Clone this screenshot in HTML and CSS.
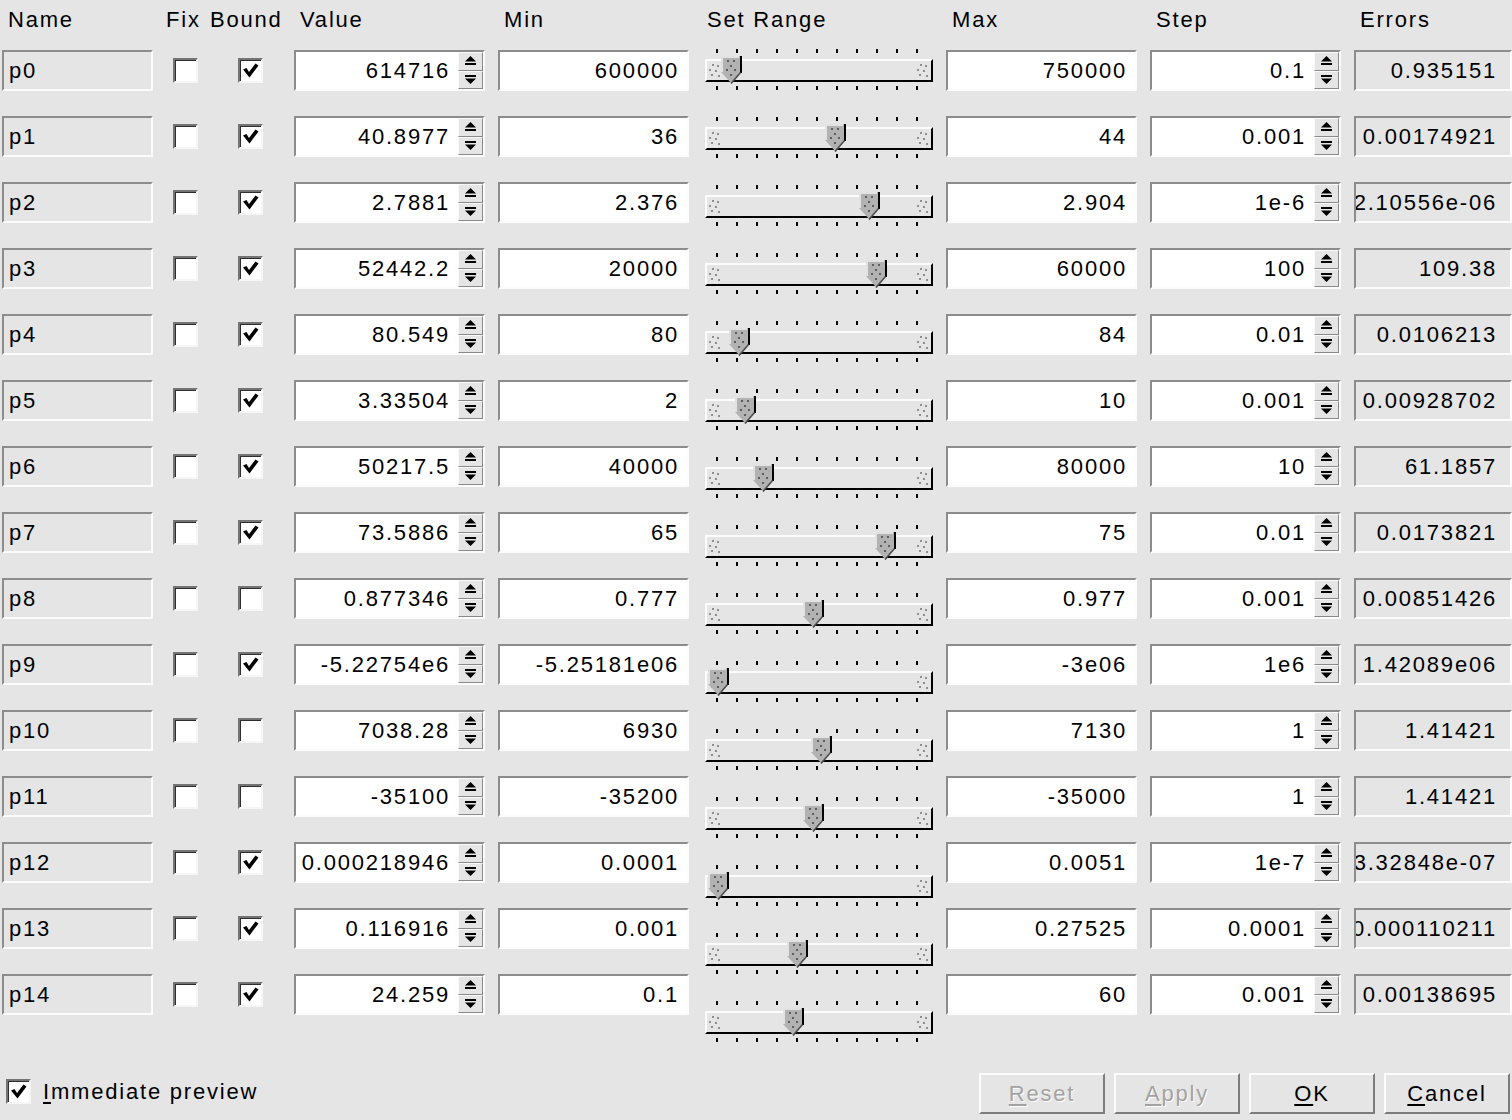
FILE: index.html
```html
<!DOCTYPE html>
<html>
<head>
<meta charset="utf-8">
<title>Parameters</title>
<link rel="stylesheet" href="styles.css">
</head>
<body>
<svg class="defs" width="0" height="0">
  <symbol id="check" viewBox="0 0 21 21"><path d="M3 9.5L6.5 8L9 12L15.5 3.5L18.5 5.5L9.5 17.5Z" fill="#000"/></symbol>
  <symbol id="up" viewBox="0 0 11 10"><path d="M0 5.5L5.5 0L11 5.5Z"/><rect y="7" width="11" height="2"/></symbol>
  <symbol id="down" viewBox="0 0 11 10"><rect y="0" width="11" height="2"/><path d="M0 3.5H11L5.5 9Z"/></symbol>
  <symbol id="stip" viewBox="0 0 13 16"><g fill="#8e8e8e"><rect x="4" y="2" width="2" height="2"/><rect x="9" y="3" width="2" height="2"/><rect x="1" y="7" width="2" height="2"/><rect x="7" y="8" width="2" height="2"/><rect x="3" y="12" width="2" height="2"/><rect x="10" y="13" width="2" height="2"/></g></symbol>
  <symbol id="thumb" viewBox="0 0 21 28"><path d="M0 0H19V16L10 27L0 16Z" fill="#b2b2b2"/><path d="M1 16V1H18" fill="none" stroke="#e2e2e2" stroke-width="2"/><path d="M20 0V17" stroke="#000" stroke-width="2"/><path d="M19.5 16.5L10 27.5" stroke="#4a4a4a" stroke-width="1.6"/><g fill="#5e5e5e"><rect x="6" y="4" width="2" height="2"/><rect x="12" y="4" width="2" height="2"/><rect x="9" y="9" width="2" height="2"/><rect x="5" y="13" width="2" height="2"/><rect x="13" y="13" width="2" height="2"/><rect x="9" y="18" width="2" height="2"/></g></symbol>
</svg>
<div class="dialog">
  <div class="table">
    <div class="col col-name">
      <div class="hdr">Name</div>
      <div class="cell field name"><span class="v">p0</span></div>
      <div class="cell field name"><span class="v">p1</span></div>
      <div class="cell field name"><span class="v">p2</span></div>
      <div class="cell field name"><span class="v">p3</span></div>
      <div class="cell field name"><span class="v">p4</span></div>
      <div class="cell field name"><span class="v">p5</span></div>
      <div class="cell field name"><span class="v">p6</span></div>
      <div class="cell field name"><span class="v">p7</span></div>
      <div class="cell field name"><span class="v">p8</span></div>
      <div class="cell field name"><span class="v">p9</span></div>
      <div class="cell field name"><span class="v">p10</span></div>
      <div class="cell field name"><span class="v">p11</span></div>
      <div class="cell field name"><span class="v">p12</span></div>
      <div class="cell field name"><span class="v">p13</span></div>
      <div class="cell field name"><span class="v">p14</span></div>
    </div>
    <div class="col col-fix">
      <div class="hdr hdr-tight">Fix</div>
      <div class="cell cbcell"><span class="cb"></span></div>
      <div class="cell cbcell"><span class="cb"></span></div>
      <div class="cell cbcell"><span class="cb"></span></div>
      <div class="cell cbcell"><span class="cb"></span></div>
      <div class="cell cbcell"><span class="cb"></span></div>
      <div class="cell cbcell"><span class="cb"></span></div>
      <div class="cell cbcell"><span class="cb"></span></div>
      <div class="cell cbcell"><span class="cb"></span></div>
      <div class="cell cbcell"><span class="cb"></span></div>
      <div class="cell cbcell"><span class="cb"></span></div>
      <div class="cell cbcell"><span class="cb"></span></div>
      <div class="cell cbcell"><span class="cb"></span></div>
      <div class="cell cbcell"><span class="cb"></span></div>
      <div class="cell cbcell"><span class="cb"></span></div>
      <div class="cell cbcell"><span class="cb"></span></div>
    </div>
    <div class="col col-bound">
      <div class="hdr hdr-tight">Bound</div>
      <div class="cell cbcell"><span class="cb"><svg class="tick"><use href="#check"/></svg></span></div>
      <div class="cell cbcell"><span class="cb"><svg class="tick"><use href="#check"/></svg></span></div>
      <div class="cell cbcell"><span class="cb"><svg class="tick"><use href="#check"/></svg></span></div>
      <div class="cell cbcell"><span class="cb"><svg class="tick"><use href="#check"/></svg></span></div>
      <div class="cell cbcell"><span class="cb"><svg class="tick"><use href="#check"/></svg></span></div>
      <div class="cell cbcell"><span class="cb"><svg class="tick"><use href="#check"/></svg></span></div>
      <div class="cell cbcell"><span class="cb"><svg class="tick"><use href="#check"/></svg></span></div>
      <div class="cell cbcell"><span class="cb"><svg class="tick"><use href="#check"/></svg></span></div>
      <div class="cell cbcell"><span class="cb"></span></div>
      <div class="cell cbcell"><span class="cb"><svg class="tick"><use href="#check"/></svg></span></div>
      <div class="cell cbcell"><span class="cb"></span></div>
      <div class="cell cbcell"><span class="cb"></span></div>
      <div class="cell cbcell"><span class="cb"><svg class="tick"><use href="#check"/></svg></span></div>
      <div class="cell cbcell"><span class="cb"><svg class="tick"><use href="#check"/></svg></span></div>
      <div class="cell cbcell"><span class="cb"><svg class="tick"><use href="#check"/></svg></span></div>
    </div>
    <div class="col col-wide">
      <div class="hdr">Value</div>
      <div class="cell spin"><div class="entry"><span class="v">614716</span></div><div class="btns"><span class="sb"><svg class="arr"><use href="#up"/></svg></span><span class="sb"><svg class="arr"><use href="#down"/></svg></span></div></div>
      <div class="cell spin"><div class="entry"><span class="v">40.8977</span></div><div class="btns"><span class="sb"><svg class="arr"><use href="#up"/></svg></span><span class="sb"><svg class="arr"><use href="#down"/></svg></span></div></div>
      <div class="cell spin"><div class="entry"><span class="v">2.7881</span></div><div class="btns"><span class="sb"><svg class="arr"><use href="#up"/></svg></span><span class="sb"><svg class="arr"><use href="#down"/></svg></span></div></div>
      <div class="cell spin"><div class="entry"><span class="v">52442.2</span></div><div class="btns"><span class="sb"><svg class="arr"><use href="#up"/></svg></span><span class="sb"><svg class="arr"><use href="#down"/></svg></span></div></div>
      <div class="cell spin"><div class="entry"><span class="v">80.549</span></div><div class="btns"><span class="sb"><svg class="arr"><use href="#up"/></svg></span><span class="sb"><svg class="arr"><use href="#down"/></svg></span></div></div>
      <div class="cell spin"><div class="entry"><span class="v">3.33504</span></div><div class="btns"><span class="sb"><svg class="arr"><use href="#up"/></svg></span><span class="sb"><svg class="arr"><use href="#down"/></svg></span></div></div>
      <div class="cell spin"><div class="entry"><span class="v">50217.5</span></div><div class="btns"><span class="sb"><svg class="arr"><use href="#up"/></svg></span><span class="sb"><svg class="arr"><use href="#down"/></svg></span></div></div>
      <div class="cell spin"><div class="entry"><span class="v">73.5886</span></div><div class="btns"><span class="sb"><svg class="arr"><use href="#up"/></svg></span><span class="sb"><svg class="arr"><use href="#down"/></svg></span></div></div>
      <div class="cell spin"><div class="entry"><span class="v">0.877346</span></div><div class="btns"><span class="sb"><svg class="arr"><use href="#up"/></svg></span><span class="sb"><svg class="arr"><use href="#down"/></svg></span></div></div>
      <div class="cell spin"><div class="entry"><span class="v">-5.22754e6</span></div><div class="btns"><span class="sb"><svg class="arr"><use href="#up"/></svg></span><span class="sb"><svg class="arr"><use href="#down"/></svg></span></div></div>
      <div class="cell spin"><div class="entry"><span class="v">7038.28</span></div><div class="btns"><span class="sb"><svg class="arr"><use href="#up"/></svg></span><span class="sb"><svg class="arr"><use href="#down"/></svg></span></div></div>
      <div class="cell spin"><div class="entry"><span class="v">-35100</span></div><div class="btns"><span class="sb"><svg class="arr"><use href="#up"/></svg></span><span class="sb"><svg class="arr"><use href="#down"/></svg></span></div></div>
      <div class="cell spin"><div class="entry"><span class="v">0.000218946</span></div><div class="btns"><span class="sb"><svg class="arr"><use href="#up"/></svg></span><span class="sb"><svg class="arr"><use href="#down"/></svg></span></div></div>
      <div class="cell spin"><div class="entry"><span class="v">0.116916</span></div><div class="btns"><span class="sb"><svg class="arr"><use href="#up"/></svg></span><span class="sb"><svg class="arr"><use href="#down"/></svg></span></div></div>
      <div class="cell spin"><div class="entry"><span class="v">24.259</span></div><div class="btns"><span class="sb"><svg class="arr"><use href="#up"/></svg></span><span class="sb"><svg class="arr"><use href="#down"/></svg></span></div></div>
    </div>
    <div class="col col-wide">
      <div class="hdr">Min</div>
      <div class="cell field num"><span class="v">600000</span></div>
      <div class="cell field num"><span class="v">36</span></div>
      <div class="cell field num"><span class="v">2.376</span></div>
      <div class="cell field num"><span class="v">20000</span></div>
      <div class="cell field num"><span class="v">80</span></div>
      <div class="cell field num"><span class="v">2</span></div>
      <div class="cell field num"><span class="v">40000</span></div>
      <div class="cell field num"><span class="v">65</span></div>
      <div class="cell field num"><span class="v">0.777</span></div>
      <div class="cell field num"><span class="v">-5.25181e06</span></div>
      <div class="cell field num"><span class="v">6930</span></div>
      <div class="cell field num"><span class="v">-35200</span></div>
      <div class="cell field num"><span class="v">0.0001</span></div>
      <div class="cell field num"><span class="v">0.001</span></div>
      <div class="cell field num"><span class="v">0.1</span></div>
    </div>
    <div class="col col-range">
      <div class="hdr hdr-range">Set Range</div>
      <div class="slider"><div class="ticks"></div><div class="track"><svg class="stip"><use href="#stip"/></svg><svg class="stip"><use href="#stip"/></svg><svg class="thumb" style="left:14px"><use href="#thumb"/></svg></div><div class="ticks"></div></div>
      <div class="slider"><div class="ticks"></div><div class="track"><svg class="stip"><use href="#stip"/></svg><svg class="stip"><use href="#stip"/></svg><svg class="thumb" style="left:118px"><use href="#thumb"/></svg></div><div class="ticks"></div></div>
      <div class="slider"><div class="ticks"></div><div class="track"><svg class="stip"><use href="#stip"/></svg><svg class="stip"><use href="#stip"/></svg><svg class="thumb" style="left:152px"><use href="#thumb"/></svg></div><div class="ticks"></div></div>
      <div class="slider"><div class="ticks"></div><div class="track"><svg class="stip"><use href="#stip"/></svg><svg class="stip"><use href="#stip"/></svg><svg class="thumb" style="left:159px"><use href="#thumb"/></svg></div><div class="ticks"></div></div>
      <div class="slider"><div class="ticks"></div><div class="track"><svg class="stip"><use href="#stip"/></svg><svg class="stip"><use href="#stip"/></svg><svg class="thumb" style="left:22px"><use href="#thumb"/></svg></div><div class="ticks"></div></div>
      <div class="slider"><div class="ticks"></div><div class="track"><svg class="stip"><use href="#stip"/></svg><svg class="stip"><use href="#stip"/></svg><svg class="thumb" style="left:28px"><use href="#thumb"/></svg></div><div class="ticks"></div></div>
      <div class="slider"><div class="ticks"></div><div class="track"><svg class="stip"><use href="#stip"/></svg><svg class="stip"><use href="#stip"/></svg><svg class="thumb" style="left:46px"><use href="#thumb"/></svg></div><div class="ticks"></div></div>
      <div class="slider"><div class="ticks"></div><div class="track"><svg class="stip"><use href="#stip"/></svg><svg class="stip"><use href="#stip"/></svg><svg class="thumb" style="left:168px"><use href="#thumb"/></svg></div><div class="ticks"></div></div>
      <div class="slider"><div class="ticks"></div><div class="track"><svg class="stip"><use href="#stip"/></svg><svg class="stip"><use href="#stip"/></svg><svg class="thumb" style="left:96px"><use href="#thumb"/></svg></div><div class="ticks"></div></div>
      <div class="slider"><div class="ticks"></div><div class="track"><svg class="stip"><use href="#stip"/></svg><svg class="stip"><use href="#stip"/></svg><svg class="thumb" style="left:1px"><use href="#thumb"/></svg></div><div class="ticks"></div></div>
      <div class="slider"><div class="ticks"></div><div class="track"><svg class="stip"><use href="#stip"/></svg><svg class="stip"><use href="#stip"/></svg><svg class="thumb" style="left:104px"><use href="#thumb"/></svg></div><div class="ticks"></div></div>
      <div class="slider"><div class="ticks"></div><div class="track"><svg class="stip"><use href="#stip"/></svg><svg class="stip"><use href="#stip"/></svg><svg class="thumb" style="left:96px"><use href="#thumb"/></svg></div><div class="ticks"></div></div>
      <div class="slider"><div class="ticks"></div><div class="track"><svg class="stip"><use href="#stip"/></svg><svg class="stip"><use href="#stip"/></svg><svg class="thumb" style="left:1px"><use href="#thumb"/></svg></div><div class="ticks"></div></div>
      <div class="slider"><div class="ticks"></div><div class="track"><svg class="stip"><use href="#stip"/></svg><svg class="stip"><use href="#stip"/></svg><svg class="thumb" style="left:80px"><use href="#thumb"/></svg></div><div class="ticks"></div></div>
      <div class="slider"><div class="ticks"></div><div class="track"><svg class="stip"><use href="#stip"/></svg><svg class="stip"><use href="#stip"/></svg><svg class="thumb" style="left:76px"><use href="#thumb"/></svg></div><div class="ticks"></div></div>
    </div>
    <div class="col col-wide">
      <div class="hdr">Max</div>
      <div class="cell field num"><span class="v">750000</span></div>
      <div class="cell field num"><span class="v">44</span></div>
      <div class="cell field num"><span class="v">2.904</span></div>
      <div class="cell field num"><span class="v">60000</span></div>
      <div class="cell field num"><span class="v">84</span></div>
      <div class="cell field num"><span class="v">10</span></div>
      <div class="cell field num"><span class="v">80000</span></div>
      <div class="cell field num"><span class="v">75</span></div>
      <div class="cell field num"><span class="v">0.977</span></div>
      <div class="cell field num"><span class="v">-3e06</span></div>
      <div class="cell field num"><span class="v">7130</span></div>
      <div class="cell field num"><span class="v">-35000</span></div>
      <div class="cell field num"><span class="v">0.0051</span></div>
      <div class="cell field num"><span class="v">0.27525</span></div>
      <div class="cell field num"><span class="v">60</span></div>
    </div>
    <div class="col col-wide">
      <div class="hdr">Step</div>
      <div class="cell spin"><div class="entry"><span class="v">0.1</span></div><div class="btns"><span class="sb"><svg class="arr"><use href="#up"/></svg></span><span class="sb"><svg class="arr"><use href="#down"/></svg></span></div></div>
      <div class="cell spin"><div class="entry"><span class="v">0.001</span></div><div class="btns"><span class="sb"><svg class="arr"><use href="#up"/></svg></span><span class="sb"><svg class="arr"><use href="#down"/></svg></span></div></div>
      <div class="cell spin"><div class="entry"><span class="v">1e-6</span></div><div class="btns"><span class="sb"><svg class="arr"><use href="#up"/></svg></span><span class="sb"><svg class="arr"><use href="#down"/></svg></span></div></div>
      <div class="cell spin"><div class="entry"><span class="v">100</span></div><div class="btns"><span class="sb"><svg class="arr"><use href="#up"/></svg></span><span class="sb"><svg class="arr"><use href="#down"/></svg></span></div></div>
      <div class="cell spin"><div class="entry"><span class="v">0.01</span></div><div class="btns"><span class="sb"><svg class="arr"><use href="#up"/></svg></span><span class="sb"><svg class="arr"><use href="#down"/></svg></span></div></div>
      <div class="cell spin"><div class="entry"><span class="v">0.001</span></div><div class="btns"><span class="sb"><svg class="arr"><use href="#up"/></svg></span><span class="sb"><svg class="arr"><use href="#down"/></svg></span></div></div>
      <div class="cell spin"><div class="entry"><span class="v">10</span></div><div class="btns"><span class="sb"><svg class="arr"><use href="#up"/></svg></span><span class="sb"><svg class="arr"><use href="#down"/></svg></span></div></div>
      <div class="cell spin"><div class="entry"><span class="v">0.01</span></div><div class="btns"><span class="sb"><svg class="arr"><use href="#up"/></svg></span><span class="sb"><svg class="arr"><use href="#down"/></svg></span></div></div>
      <div class="cell spin"><div class="entry"><span class="v">0.001</span></div><div class="btns"><span class="sb"><svg class="arr"><use href="#up"/></svg></span><span class="sb"><svg class="arr"><use href="#down"/></svg></span></div></div>
      <div class="cell spin"><div class="entry"><span class="v">1e6</span></div><div class="btns"><span class="sb"><svg class="arr"><use href="#up"/></svg></span><span class="sb"><svg class="arr"><use href="#down"/></svg></span></div></div>
      <div class="cell spin"><div class="entry"><span class="v">1</span></div><div class="btns"><span class="sb"><svg class="arr"><use href="#up"/></svg></span><span class="sb"><svg class="arr"><use href="#down"/></svg></span></div></div>
      <div class="cell spin"><div class="entry"><span class="v">1</span></div><div class="btns"><span class="sb"><svg class="arr"><use href="#up"/></svg></span><span class="sb"><svg class="arr"><use href="#down"/></svg></span></div></div>
      <div class="cell spin"><div class="entry"><span class="v">1e-7</span></div><div class="btns"><span class="sb"><svg class="arr"><use href="#up"/></svg></span><span class="sb"><svg class="arr"><use href="#down"/></svg></span></div></div>
      <div class="cell spin"><div class="entry"><span class="v">0.0001</span></div><div class="btns"><span class="sb"><svg class="arr"><use href="#up"/></svg></span><span class="sb"><svg class="arr"><use href="#down"/></svg></span></div></div>
      <div class="cell spin"><div class="entry"><span class="v">0.001</span></div><div class="btns"><span class="sb"><svg class="arr"><use href="#up"/></svg></span><span class="sb"><svg class="arr"><use href="#down"/></svg></span></div></div>
    </div>
    <div class="col col-err">
      <div class="hdr">Errors</div>
      <div class="cell field err"><span class="v">0.935151</span></div>
      <div class="cell field err"><span class="v">0.00174921</span></div>
      <div class="cell field err"><span class="v">2.10556e-06</span></div>
      <div class="cell field err"><span class="v">109.38</span></div>
      <div class="cell field err"><span class="v">0.0106213</span></div>
      <div class="cell field err"><span class="v">0.00928702</span></div>
      <div class="cell field err"><span class="v">61.1857</span></div>
      <div class="cell field err"><span class="v">0.0173821</span></div>
      <div class="cell field err"><span class="v">0.00851426</span></div>
      <div class="cell field err"><span class="v">1.42089e06</span></div>
      <div class="cell field err"><span class="v">1.41421</span></div>
      <div class="cell field err"><span class="v">1.41421</span></div>
      <div class="cell field err"><span class="v">3.32848e-07</span></div>
      <div class="cell field err"><span class="v">0.000110211</span></div>
      <div class="cell field err"><span class="v">0.00138695</span></div>
    </div>
  </div>
  <div class="footer">
    <div class="preview">
      <span class="cb"><svg class="tick"><use href="#check"/></svg></span>
      <span class="label"><u>I</u>mmediate preview</span>
    </div>
    <div class="buttons">
      <div class="button disabled"><span><u>R</u>eset</span></div>
      <div class="button disabled"><span><u>A</u>pply</span></div>
      <div class="button"><span><u>O</u>K</span></div>
      <div class="button"><span><u>C</u>ancel</span></div>
    </div>
  </div>
</div>
</body>
</html>
```

FILE: styles.css
```css
* { box-sizing: border-box; }
html, body { margin: 0; padding: 0; }
body {
  width: 1512px;
  height: 1120px;
  overflow: hidden;
  background: #e5e5e5;
  color: #000;
  font-family: "Liberation Sans", Arial, sans-serif;
  font-size: 22px;
  letter-spacing: 1.8px;
}
.defs { display: block; width: 0; height: 0; overflow: hidden; }
.dialog { height: 1120px; display: flex; flex-direction: column; }
.table { display: flex; align-items: flex-start; padding-left: 2px; }
.col { display: flex; flex-direction: column; flex: none; }
.col-name { width: 151px; }
.col-fix { width: 40px; margin-left: 11px; }
.col-bound { width: 73px; margin-left: 4px; }
.col-wide { width: 191px; margin-left: 13px; }
.col-range { width: 228px; margin-left: 16px; }
.col-err { width: 158px; margin-left: 13px; }

.hdr { height: 40px; line-height: 40px; margin-bottom: 10px; padding-left: 6px; white-space: nowrap; }
.hdr-tight { padding-left: 2px; }
.hdr-range { padding-left: 2px; margin-bottom: 9px; }

.cell { height: 41px; margin-bottom: 25px; flex: none; }
.v { white-space: nowrap; flex: none; }

.field {
  display: flex;
  align-items: center;
  border: 2px solid;
  border-color: #8c8c8c #fcfcfc #fcfcfc #8c8c8c;
  overflow: hidden;
}
.name { padding-left: 5px; }
.num { background: #fff; justify-content: flex-end; padding-right: 8px; }
.err { justify-content: flex-end; padding-right: 13px; }

.cbcell { display: flex; align-items: center; padding-left: 9px; }
.col-bound .cbcell { padding-left: 30px; }
.cb {
  display: block;
  width: 25px;
  height: 25px;
  background: #fff;
  border: 2px solid;
  border-color: #747474 #f6f6f6 #f6f6f6 #747474;
  box-shadow: inset 1px 1px 0 #2e2e2e;
  flex: none;
}
.tick { display: block; width: 21px; height: 21px; }

.spin {
  display: flex;
  background: #fff;
  border: 2px solid;
  border-color: #8c8c8c #fcfcfc #fcfcfc #8c8c8c;
}
.entry {
  flex: 1;
  display: flex;
  align-items: center;
  justify-content: flex-end;
  padding-right: 8px;
  overflow: hidden;
}
.btns { width: 25px; flex: none; display: flex; flex-direction: column; background: #e5e5e5; }
.sb {
  flex: 1 1 0;
  display: flex;
  align-items: center;
  justify-content: center;
  border: 1px solid;
  border-color: #fafafa #8a8a8a #8a8a8a #fafafa;
}
.arr { display: block; width: 11px; height: 10px; fill: #000; }

.slider { height: 42px; margin-bottom: 26px; flex: none; }
.ticks {
  height: 4px;
  width: 214px;
  background: repeating-linear-gradient(90deg, transparent 0 11px, #000 11px 13px, transparent 13px 20px);
}
.track {
  position: relative;
  height: 23px;
  margin: 6px 0 4px;
  border: 2px solid;
  border-color: #fcfcfc #000 #000 #fcfcfc;
  display: flex;
  justify-content: space-between;
  align-items: flex-start;
  padding: 1px 2px 0 1px;
}
.stip { display: block; width: 13px; height: 16px; }
.thumb { position: absolute; top: -5px; width: 21px; height: 28px; }

.footer {
  margin-top: auto;
  display: flex;
  align-items: center;
  padding: 0 2px 6px 6px;
}
.preview { display: flex; align-items: center; gap: 12px; margin-top: -4px; }
.label u, .button u { text-decoration-thickness: 2px; text-underline-offset: 3px; }
.buttons { margin-left: auto; display: flex; gap: 9px; }
.button {
  width: 126px;
  height: 41px;
  display: flex;
  align-items: center;
  justify-content: center;
  border: 2px solid;
  border-color: #fcfcfc #7c7c7c #7c7c7c #fcfcfc;
}
.disabled { color: #a2a2a2; text-shadow: 1px 1px 0 #ffffff; }
```
